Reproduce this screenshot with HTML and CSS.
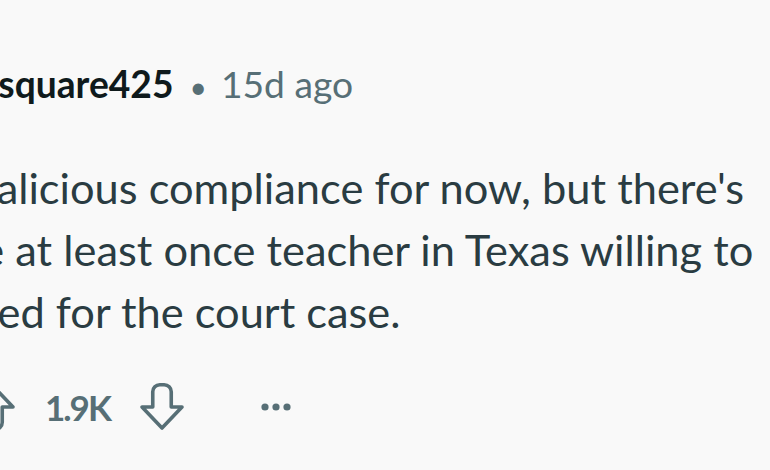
FILE: index.html
```html
<!DOCTYPE html>
<html lang="en">
<head>
<meta charset="utf-8">
<title>Comment</title>
<link rel="stylesheet" href="styles.css">
</head>
<body>
<article class="comment">
  <header class="meta">
    <span class="author">Pasquare425</span>
    <span class="sep">•</span>
    <time class="age">15d ago</time>
  </header>
  <p class="body">Malicious compliance for now, but there's<br>be at least once teacher in Texas willing to<br>fired for the court case.</p>
  <footer class="actions">
    <button class="vote up" aria-label="Upvote">
      <svg viewBox="0 0 50 50" width="50" height="50"><path d="M15.75 25 V40.25 A7 7 0 0 0 22.75 47.25 H27.25 A7 7 0 0 0 34.25 40.25 V25 H45 L25 4 L5 25 Z"/></svg>
    </button>
    <span class="score">1.9K</span>
    <button class="vote down" aria-label="Downvote">
      <svg viewBox="0 0 50 50" width="50" height="50"><path d="M15.75 25 V9.75 A7 7 0 0 1 22.75 2.75 H27.25 A7 7 0 0 1 34.25 9.75 V25 H45 L25 46 L5 25 Z"/></svg>
    </button>
    <button class="more" aria-label="More options">
      <svg viewBox="0 0 30 10" width="30" height="10"><circle cx="4" cy="5" r="3.6"/><circle cx="15" cy="5" r="3.6"/><circle cx="26" cy="5" r="3.6"/></svg>
    </button>
  </footer>
</article>
</body>
</html>
```
FILE: styles.css
```css
html, body {
  margin: 0;
  padding: 0;
  background: #f9f9f9;
  overflow: hidden;
  width: 770px;
  height: 470px;
}

.comment {
  margin-left: -43px;
  padding-top: 59px;
  font-family: "Lato", "Open Sans", sans-serif;
  font-variant-ligatures: none;
  width: 900px;
}

.meta {
  display: flex;
  align-items: baseline;
  height: 50px;
  line-height: 50px;
  font-size: 37.2px;
  white-space: nowrap;
}

.author {
  font-weight: 700;
  color: #0f1a1c;
}

.sep {
  color: #576f76;
  margin: 0 14px 0 16px;
  font-size: 30px;
}

.age {
  color: #576f76;
}

.body {
  margin: 47px 0 0;
  font-size: 43.4px;
  line-height: 62px;
  color: #2a3c42;
  white-space: nowrap;
}

.actions {
  display: flex;
  align-items: center;
  height: 50px;
  margin-top: 40px;
}

.vote, .more {
  border: 0;
  background: none;
  padding: 0;
  display: flex;
  align-items: center;
  justify-content: center;
}

.vote svg path {
  fill: none;
  stroke: #576f76;
  stroke-width: 3.6;
  stroke-linejoin: round;
}

.up {
  margin-left: 11px;
}

.score {
  margin: 0 27px 0 27px;
  font-size: 35px;
  font-weight: 700;
  color: #576f76;
  letter-spacing: -2px;
}

.more {
  margin-left: 74px;
}

.more svg circle {
  fill: #576f76;
}
```
